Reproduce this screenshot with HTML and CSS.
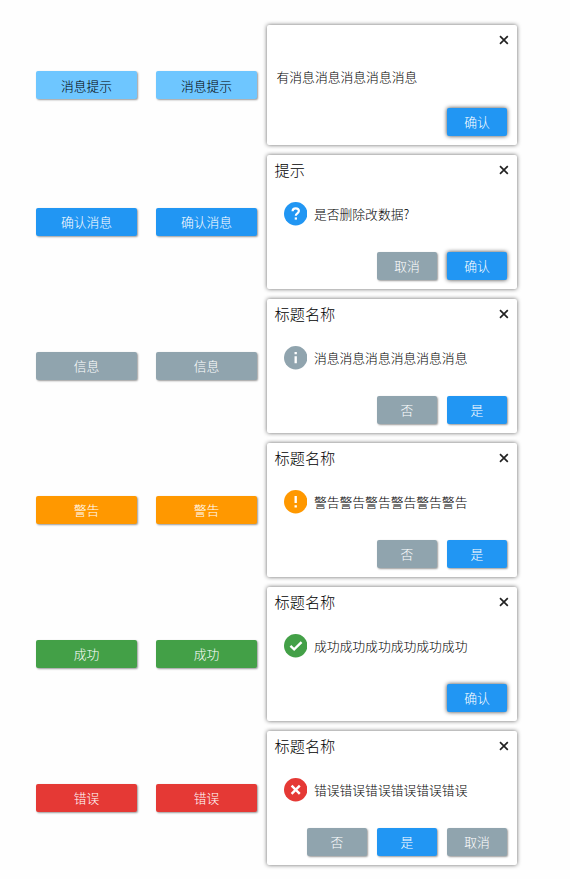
FILE: index.html
```html
<!DOCTYPE html>
<html lang="zh-CN">
<head>
<meta charset="utf-8">
<title>消息框</title>
<link rel="stylesheet" href="styles.css">
</head>
<body>
<svg class="defs" width="0" height="0">
  <symbol id="close" viewBox="0 0 10 10"><path d="M1 1.2 8.8 8.8M8.8 1.2 1 8.8" fill="none" stroke="#222" stroke-width="1.7"/></symbol>
</svg>
<main class="demo">
  <section class="row">
    <button class="btn light">消息提示</button>
    <button class="btn light">消息提示</button>
    <div class="dialog plain">
      <header><h2></h2><svg class="close"><use href="#close"/></svg></header>
      <div class="content"><p>有消息消息消息消息消息</p></div>
      <footer><button class="btn primary focus">确认</button></footer>
    </div>
  </section>
  <section class="row">
    <button class="btn primary">确认消息</button>
    <button class="btn primary">确认消息</button>
    <div class="dialog">
      <header><h2>提示</h2><svg class="close"><use href="#close"/></svg></header>
      <div class="content"><svg class="icon" viewBox="0 0 24 24"><circle cx="12" cy="12" r="12" fill="#2196f3"/><path d="M8.8 9.5C8.8 7.5 10.2 6.5 12 6.5s3.3 1 3.3 2.8c0 2.2-3.2 2.4-3.2 4.7" fill="none" stroke="#fff" stroke-width="2.2"/><path d="M11 15.8h2.3v2.3H11z" fill="#fff"/></svg><p>是否删除改数据?</p></div>
      <footer><button class="btn info">取消</button><button class="btn primary focus">确认</button></footer>
    </div>
  </section>
  <section class="row">
    <button class="btn info">信息</button>
    <button class="btn info">信息</button>
    <div class="dialog">
      <header><h2>标题名称</h2><svg class="close"><use href="#close"/></svg></header>
      <div class="content"><svg class="icon" viewBox="0 0 24 24"><circle cx="12" cy="12" r="12" fill="#90a4ae"/><path d="M10.8 6.2h2.4v2.3h-2.4zM10.8 10.6h2.4v7.2h-2.4z" fill="#fff"/></svg><p>消息消息消息消息消息消息</p></div>
      <footer><button class="btn info">否</button><button class="btn primary">是</button></footer>
    </div>
  </section>
  <section class="row">
    <button class="btn warning">警告</button>
    <button class="btn warning">警告</button>
    <div class="dialog">
      <header><h2>标题名称</h2><svg class="close"><use href="#close"/></svg></header>
      <div class="content"><svg class="icon" viewBox="0 0 24 24"><circle cx="12" cy="12" r="12" fill="#ff9800"/><path d="M10.8 6.2h2.4v7.2h-2.4zM10.8 15.6h2.4v2.3h-2.4z" fill="#fff"/></svg><p>警告警告警告警告警告警告</p></div>
      <footer><button class="btn info">否</button><button class="btn primary">是</button></footer>
    </div>
  </section>
  <section class="row">
    <button class="btn success">成功</button>
    <button class="btn success">成功</button>
    <div class="dialog">
      <header><h2>标题名称</h2><svg class="close"><use href="#close"/></svg></header>
      <div class="content"><svg class="icon" viewBox="0 0 24 24"><circle cx="12" cy="12" r="12" fill="#43a047"/><path d="M6.6 12.2 10.4 15.8 18 8.3" fill="none" stroke="#fff" stroke-width="2.4"/></svg><p>成功成功成功成功成功成功</p></div>
      <footer><button class="btn primary focus">确认</button></footer>
    </div>
  </section>
  <section class="row">
    <button class="btn danger">错误</button>
    <button class="btn danger">错误</button>
    <div class="dialog">
      <header><h2>标题名称</h2><svg class="close"><use href="#close"/></svg></header>
      <div class="content"><svg class="icon" viewBox="0 0 24 24"><circle cx="12" cy="12" r="12" fill="#e53935"/><path d="M7.8 7.8l8.4 8.4M16.2 7.8l-8.4 8.4" fill="none" stroke="#fff" stroke-width="2.5"/></svg><p>错误错误错误错误错误错误</p></div>
      <footer><button class="btn info">否</button><button class="btn primary">是</button><button class="btn info">取消</button></footer>
    </div>
  </section>
</main>
</body>
</html>
```
FILE: styles.css
```css
* { box-sizing: border-box; }
body {
  margin: 0;
  background: #fefefe;
  color: #000;
  font: 300 12.8px/20px "Noto Sans CJK SC", sans-serif;
}
.defs { display: block; }
.demo {
  display: flex;
  flex-direction: column;
  gap: 10px;
  padding: 25px 0 14px 36px;
}
.row {
  display: grid;
  grid-template-columns: 101px 101px 250px;
  column-gap: 19px;
  align-items: center;
}
.btn {
  height: 28px;
  padding: 0;
  border: 0;
  border-radius: 2px;
  color: #fff;
  font: inherit;
  line-height: 26px;
  box-shadow: 1px 1px 2px rgba(0, 0, 0, .4);
}
.light { padding-top: 2px; background: #6ec6ff; color: #000; }
.primary { background: #2196f3; }
.info { background: #90a4ae; }
.warning { background: #ff9800; }
.success { background: #43a047; }
.danger { background: #e53935; }
.focus { box-shadow: 0 0 4px rgba(0, 0, 0, .75); }
.dialog {
  display: flex;
  flex-direction: column;
  height: 134px;
  margin-left: -9px;
  width: 250px;
  padding: 0 10px 9px 7.5px;
  border-radius: 2px;
  background: #fff;
  box-shadow: 0 0 4px rgba(0, 0, 0, .6);
}
.plain { height: 120px; }
.dialog header {
  display: flex;
  justify-content: space-between;
  align-items: center;
  height: 30px;
  margin-right: -2px;
}
.dialog h2 { margin: 0 0 2px; font-size: 15.2px; font-weight: 300; line-height: 28px; }
.close { width: 10px; height: 10px; }
.content {
  display: flex;
  flex: 1;
  align-items: center;
  gap: 7px;
  padding: 0 0 9px 9px;
}
.content p { margin: 0; }
.plain .content { padding: 0 0 9px 2px; }
.icon { width: 23.4px; height: 23.4px; }
.dialog footer { display: flex; justify-content: flex-end; gap: 10px; }
.dialog footer .btn { width: 60px; }
```
